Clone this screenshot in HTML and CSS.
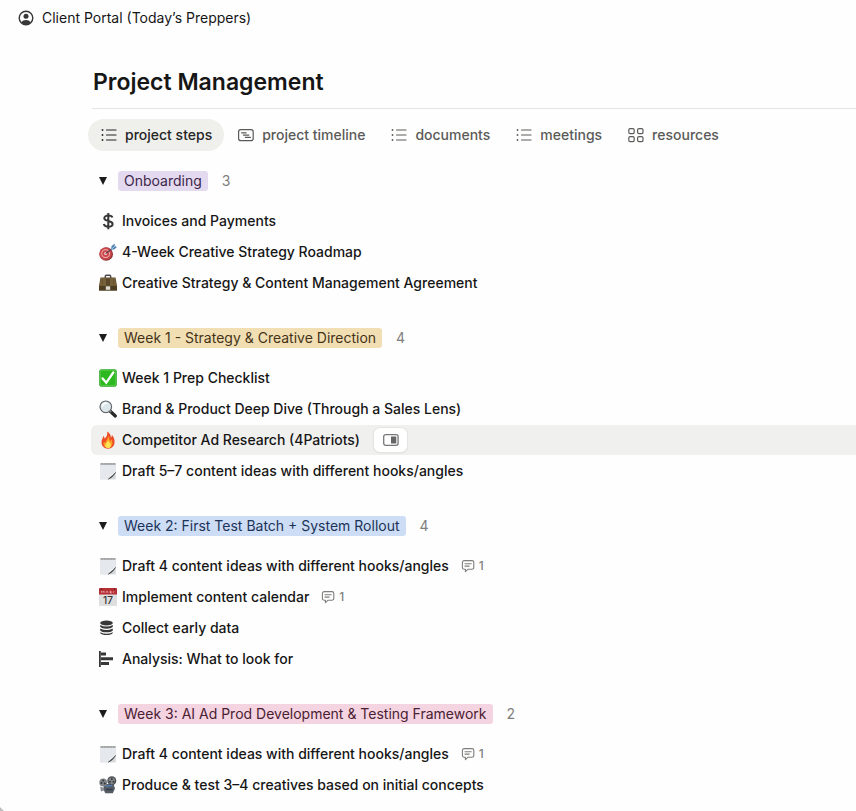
FILE: index.html
```html
<!DOCTYPE html>
<html lang="en">
<head>
<meta charset="utf-8">
<meta name="viewport" content="width=device-width, initial-scale=1">
<title>Client Portal (Today’s Preppers)</title>
<link rel="stylesheet" href="styles.css">
</head>
<body>
<svg class="sprite" aria-hidden="true">
  <symbol id="list" viewBox="0 0 16 16"><g fill="none" stroke="currentColor" stroke-width="1.2" stroke-linecap="round"><path d="M5.500 3h9.500M5.500 8h9.500M5.500 13h9.500"/></g><g fill="currentColor"><circle cx="1.500" cy="3" r=".9"/><circle cx="1.500" cy="8" r=".9"/><circle cx="1.500" cy="13" r=".9"/></g></symbol>
  <symbol id="timeline" viewBox="0 0 16 16"><g fill="none" stroke="currentColor" stroke-width="1.2" stroke-linecap="round"><rect x=".6" y="2.6" width="14.6" height="11" rx="2.2"/><path d="M3.6 5.8h4.6M5.4 8.1h5.4M7.4 10.4h5"/></g></symbol>
  <symbol id="gallery" viewBox="0 0 16 16"><g fill="none" stroke="currentColor" stroke-width="1.2"><rect x=".8" y="1.6" width="5.4" height="5" rx="1.4"/><rect x="9.6" y="1.6" width="5.4" height="5" rx="1.4"/><rect x=".8" y="9.6" width="5.4" height="5" rx="1.4"/><rect x="9.6" y="9.6" width="5.4" height="5" rx="1.4"/></g></symbol>
  <symbol id="comment" viewBox="0 0 14 14"><path d="M3.2 1.6h7.8a1.8 1.8 0 0 1 1.8 1.8v5a1.8 1.8 0 0 1-1.8 1.8H7.2L4.4 12.6v-2.4H3.2a1.8 1.8 0 0 1-1.8-1.8v-5a1.8 1.8 0 0 1 1.8-1.8zM4 4.7h6.2M4 7.1h4.2" fill="none" stroke="currentColor" stroke-width="1.1" stroke-linejoin="round" stroke-linecap="round"/></symbol>
  <symbol id="dollar" viewBox="0 0 18 18"><path d="M13.4 5.6C13 4.2 11.500 3.500 9.300 3.500 6.900 3.500 5.300 4.500 5.300 6.200c0 3.700 8.300 1.900 8.300 5.700 0 1.800-1.800 2.800-4.300 2.800-2.500 0-4.100-1-4.500-2.600M9.300 1v16.200" fill="none" stroke="#373737" stroke-width="2"/></symbol>
  <symbol id="target" viewBox="0 0 18 18"><circle cx="7.200" cy="11" r="6.800" fill="#8f3438"/><circle cx="6.600" cy="10.600" r="6.200" fill="#cd474b"/><circle cx="6.600" cy="10.600" r="4.300" fill="#e9b5b7"/><circle cx="6.600" cy="10.600" r="3.400" fill="#cf4348"/><circle cx="6.600" cy="10.600" r="1.500" fill="#f2d2d2"/><path d="M6.600 10.600L14 5" stroke="#513a4e" stroke-width="1.100"/><path d="M12 6.500l.6-3.500L15.600.7l.2 2.400 2.100.9-2.700 2.500z" fill="#4d7fb0"/><path d="M12 6.500l4-3.400" stroke="#bcdcf2" stroke-width=".8"/></symbol>
  <symbol id="briefcase" viewBox="0 0 18 18"><path d="M6.300 4V2.500Q6.300 1.300 7.500 1.300h3Q11.700 1.300 11.700 2.500V4" fill="none" stroke="#4a484a" stroke-width="1.400"/><path d="M1.500 3.500h15L18 12v4.500H0V12z" fill="#5c4928"/><path d="M2 4h14l1.300 7H.7z" fill="#75603a"/><path d="M0 11.500h18v5H0z" fill="#4d3d22"/><path d="M.6 11.200h16.800" stroke="#927a4c" stroke-width=".7"/><path d="M7 4.500h4v7H7z" fill="#5b4729"/><path d="M6.800 12.300h4.400v3.500H6.800z" fill="#dfdcd4"/><path d="M3.400 5v7M14.600 5v7" stroke="#655130" stroke-width=".8"/></symbol>
  <symbol id="check" viewBox="0 0 18 18"><rect x=".2" y=".2" width="17.600" height="17.600" rx="2.400" fill="#1c9e17"/><rect x="1.200" y="1.100" width="15.600" height="15.600" rx="1.800" fill="#2cb91f" stroke="#88dc75" stroke-width=".6"/><path d="M3.600 9.400l3.700 4.300 7-10.200" fill="none" stroke="#fff" stroke-width="2.300" stroke-linecap="round"/></symbol>
  <symbol id="search" viewBox="0 0 18 18"><path d="M11 11l5.300 5" stroke="#292929" stroke-width="3.200" stroke-linecap="round"/><path d="M10.500 10.600l1.700 1.700" stroke="#888" stroke-width="1.500"/><circle cx="6.800" cy="6.800" r="5.800" fill="#dce7ec" stroke="#62676a" stroke-width="1.200"/><path d="M3.300 6.500a3.700 3.700 0 0 1 4-3.200" fill="none" stroke="#fff" stroke-width="1.600" stroke-linecap="round"/></symbol>
  <symbol id="fire" viewBox="0 0 18 18"><path d="M8.200.5c3.300 2 3.700 4.500 3.600 6 1-.5 1.200-1.700 1-2.700 1.800 2 2.800 4.400 2.800 7 0 4-2.700 6.900-6.600 6.900-4 0-6.500-2.700-6.500-6.400 0-2.700 1.400-4.200 1.900-6.300.9.800 1.200 1.700 1.100 2.800C7.800 5.900 8.700 3.200 8.200.5z" fill="#ed4d24"/><path d="M9.200 4.500c1.700 2.500.8 4.200 2 5.300.9-.3 1.400-.9 1.600-1.600 1.300 3.600.7 8.300-3.700 8.500-3.700.1-5.200-2.700-4.300-6 .5.700 1.100 1 1.800.9.200-2.700 2.800-3.600 2.600-7.100z" fill="#ff9b28"/><path d="M9.200 9c.1 2.200 2.700 2.700 2.700 5.200 0 1.900-1.100 2.800-2.800 2.800s-2.900-1-2.800-2.700c.1-2.100 2.700-2.800 2.900-5.300z" fill="#ffe454"/></symbol>
  <symbol id="note" viewBox="0 0 18 18"><path d="M1.400 1h15.300v16.400H1.400z" fill="#d5d7d9"/><path d="M1.400 3h15v7.500L9.500 17H1.400z" fill="#e5e8ec"/><path d="M1.400 1h15.300v2H1.400z" fill="#b5b6b8"/><path d="M2 1.900h14" stroke="#77797b" stroke-width=".8" stroke-dasharray=".7 .8"/><path d="M9.500 17l1.600-4.200q3 .2 5.400-2.600z" fill="#f3f4f5"/><path d="M9.300 17.200q4.300-1.600 7.300-6.800-2.200 3-4.600 4.300z" fill="#333638" stroke="#333638" stroke-width=".5"/></symbol>
  <symbol id="database" viewBox="0 0 18 18"><g fill="#373737"><ellipse cx="7.500" cy="4" rx="6.300" ry="2.600"/><path d="M1.200 6q6.300 3 12.600 0v1.800q-1.600 1.900-6.300 1.900T1.200 7.800zM1.200 9.600q6.300 3 12.600 0v1.800q-1.600 1.900-6.300 1.900t-6.300-1.900zM1.200 13.200q6.300 3 12.600 0V14q-1.600 2.100-6.300 2.100T1.200 14z"/></g></symbol>
  <symbol id="chart" viewBox="0 0 18 18"><path d="M0 1h1.800v16H0zM2 2.500h5v3H2zM2 7.300h12v3H2zM2 12.100h8v3H2z" fill="#373737"/></symbol>
  <symbol id="projector" viewBox="0 0 18 18"><path d="M4.800 8.400l9.400-1.200 1.800 5.400-2.200 4.700H6.300L4.300 13z" fill="#555b64"/><path d="M1 10.500l4 1.500v2.500L2 15.600z" fill="#898e95"/><circle cx="4.200" cy="6.400" r="3.900" fill="#7f8489"/><circle cx="12.800" cy="4.800" r="4.500" fill="#494d52"/><circle cx="12.800" cy="4.800" r="3.200" fill="#85888b"/><g fill="#34383c"><circle cx="4.200" cy="4.500" r="1"/><circle cx="2.500" cy="7" r="1"/><circle cx="5.800" cy="7.400" r="1"/><circle cx="12.800" cy="3" r="1"/><circle cx="11" cy="5.700" r="1"/><circle cx="14.500" cy="5.700" r="1"/></g><path d="M7 10.300l6.500-1" stroke="#527bad" stroke-width="1.400"/><path d="M7 13.500h6.500" stroke="#343c47" stroke-width="1.500"/></symbol>
</svg>

<header class="topbar">
  <a class="crumb" href="#">
    <svg class="icon-16" viewBox="0 0 16 16" aria-hidden="true"><circle cx="8" cy="8" r="6.800" fill="none" stroke="#373737" stroke-width="1.400"/><circle cx="8" cy="6.200" r="2.500" fill="#373737"/><path d="M3.200 12.300Q5 10 8 10t4.800 2.300Q11 14.600 8 14.600t-4.800-2.300z" fill="#373737"/></svg>
    <span>Client Portal (Today’s Preppers)</span>
  </a>
</header>

<main class="page">
  <h1 class="title">Project Management</h1>
  <nav class="tabs" aria-label="Views">
    <a class="tab tab-active" href="#" aria-current="page"><svg class="icon-16" aria-hidden="true"><use href="#list"/></svg>project steps</a>
    <a class="tab" href="#"><svg class="icon-16" aria-hidden="true"><use href="#timeline"/></svg>project timeline</a>
    <a class="tab" href="#"><svg class="icon-16" aria-hidden="true"><use href="#list"/></svg>documents</a>
    <a class="tab" href="#"><svg class="icon-16" aria-hidden="true"><use href="#list"/></svg>meetings</a>
    <a class="tab" href="#"><svg class="icon-16" aria-hidden="true"><use href="#gallery"/></svg>resources</a>
  </nav>

  <section class="group">
    <div class="group-head">
      <button class="toggle" type="button" aria-label="Toggle group" aria-expanded="true"></button>
      <h2 class="tag tag-purple">Onboarding</h2><span class="count">3</span>
    </div>
    <ul class="rows">
      <li class="row"><a class="item" href="#"><svg class="icon-18" aria-hidden="true"><use href="#dollar"/></svg>Invoices and Payments</a></li>
      <li class="row"><a class="item" href="#"><svg class="icon-18" aria-hidden="true"><use href="#target"/></svg>4-Week Creative Strategy Roadmap</a></li>
      <li class="row"><a class="item" href="#"><svg class="icon-18" aria-hidden="true"><use href="#briefcase"/></svg>Creative Strategy &amp; Content Management Agreement</a></li>
    </ul>
  </section>

  <section class="group">
    <div class="group-head">
      <button class="toggle" type="button" aria-label="Toggle group" aria-expanded="true"></button>
      <h2 class="tag tag-yellow">Week 1 - Strategy &amp; Creative Direction</h2><span class="count">4</span>
    </div>
    <ul class="rows">
      <li class="row"><a class="item" href="#"><svg class="icon-18" aria-hidden="true"><use href="#check"/></svg>Week 1 Prep Checklist</a></li>
      <li class="row"><a class="item" href="#"><svg class="icon-18" aria-hidden="true"><use href="#search"/></svg>Brand &amp; Product Deep Dive (Through a Sales Lens)</a></li>
      <li class="row row-hover"><a class="item" href="#"><svg class="icon-18" aria-hidden="true"><use href="#fire"/></svg>Competitor Ad Research (4Patriots)</a>
        <button class="peek" type="button" aria-label="Open in side peek"><svg class="icon-16" viewBox="0 0 16 16" aria-hidden="true"><rect x=".7" y="2.700" width="14.400" height="10.600" rx="2" fill="none" stroke="#777" stroke-width="1.300"/><path d="M8 4.500h5.300v7H8z" fill="#666"/></svg></button></li>
      <li class="row"><a class="item" href="#"><svg class="icon-18" aria-hidden="true"><use href="#note"/></svg>Draft 5–7 content ideas with different hooks/angles</a></li>
    </ul>
  </section>

  <section class="group">
    <div class="group-head">
      <button class="toggle" type="button" aria-label="Toggle group" aria-expanded="true"></button>
      <h2 class="tag tag-blue">Week 2: First Test Batch + System Rollout</h2><span class="count">4</span>
    </div>
    <ul class="rows">
      <li class="row"><a class="item" href="#"><svg class="icon-18" aria-hidden="true"><use href="#note"/></svg>Draft 4 content ideas with different hooks/angles</a><button class="comments" type="button"><svg class="icon-14" aria-hidden="true"><use href="#comment"/></svg>1</button></li>
      <li class="row"><a class="item" href="#"><svg class="icon-18" viewBox="0 0 18 18" aria-hidden="true"><rect y="0" width="18" height="18" rx="1" fill="#dedede"/><path d="M0 1q0-1 1-1h16q1 0 1 1v5.600H0z" fill="#b62f34"/><path d="M2.500 4.900v-2l1.300 1.400 1.300-1.400v2M7 4.900l1-2 1 2M11 4.900v-2l1.500.9-1.500.9 2 .4M15 3l-.8 2" stroke="#ecc1c2" stroke-width=".6" fill="none"/><circle cx="2.400" cy="1.300" r=".8" fill="#631d1e"/><circle cx="15.600" cy="1.300" r=".8" fill="#631d1e"/><text class="calendar-day" x="9" y="16">17</text></svg>Implement content calendar</a><button class="comments" type="button"><svg class="icon-14" aria-hidden="true"><use href="#comment"/></svg>1</button></li>
      <li class="row"><a class="item" href="#"><svg class="icon-18" aria-hidden="true"><use href="#database"/></svg>Collect early data</a></li>
      <li class="row"><a class="item" href="#"><svg class="icon-18" aria-hidden="true"><use href="#chart"/></svg>Analysis: What to look for</a></li>
    </ul>
  </section>

  <section class="group">
    <div class="group-head">
      <button class="toggle" type="button" aria-label="Toggle group" aria-expanded="true"></button>
      <h2 class="tag tag-pink">Week 3: AI Ad Prod Development &amp; Testing Framework</h2><span class="count">2</span>
    </div>
    <ul class="rows">
      <li class="row"><a class="item" href="#"><svg class="icon-18" aria-hidden="true"><use href="#note"/></svg>Draft 4 content ideas with different hooks/angles</a><button class="comments" type="button"><svg class="icon-14" aria-hidden="true"><use href="#comment"/></svg>1</button></li>
      <li class="row"><a class="item" href="#"><svg class="icon-18" aria-hidden="true"><use href="#projector"/></svg>Produce &amp; test 3–4 creatives based on initial concepts</a></li>
    </ul>
  </section>
</main>
<div class="window-corner"></div>
</body>
</html>
```
FILE: styles.css
```css
* { box-sizing: border-box; }

body {
  margin: 0;
  background: #fefefe;
  color: #161616;
  font: 500 14px/20px Inter, "Liberation Sans", sans-serif;
}

a { color: inherit; text-decoration: none; }

button {
  margin: 0;
  padding: 0;
  border: 0;
  background: none;
  color: inherit;
  font: inherit;
}

.sprite { position: absolute; width: 0; height: 0; }
.icon-14, .icon-16, .icon-18 { flex: none; display: block; }
.icon-14 { width: 14px; height: 14px; }
.icon-16 { width: 16px; height: 16px; }
.icon-18 { width: 18px; height: 18px; }

.topbar { display: flex; padding: 8px 18px; }

.crumb {
  display: flex;
  align-items: center;
  gap: 8px;
  font-weight: 400;
}

.page { padding: 30px 0 4px 92px; }

.title {
  margin: 0;
  padding: 0 1px 10px;
  border-bottom: 1px solid #e4e4e3;
  font-size: 23px;
  line-height: 32px;
  font-weight: 600;
}

.tabs {
  display: flex;
  gap: 1px;
  margin: 10px 0 0 -4px;
}

.tab {
  display: flex;
  align-items: center;
  gap: 8px;
  height: 32px;
  padding: 0 12px 0 13px;
  border-radius: 16px;
  color: #5a5a58;
  white-space: nowrap;
}

.tab-active { background: #efefec; color: #252525; }

.group { margin-top: 30px; }
.tabs + .group { margin-top: 20px; }

.group-head {
  display: flex;
  align-items: center;
  height: 20px;
}

.toggle {
  width: 10px;
  height: 20px;
  margin: 0 10px 0 6px;
}

.toggle::before {
  content: "";
  display: block;
  height: 8px;
  margin: 0 1px;
  background: #1c1c1c;
  clip-path: polygon(0 0, 100% 0, 50% 100%);
}

.tag {
  margin: 0;
  padding: 0 6px;
  border-radius: 3px;
  font-size: 14px;
  line-height: 20px;
  font-weight: 400;
  white-space: nowrap;
}

.tag-purple { background: #e4daf0; color: #3d2649; }
.tag-yellow { background: #f1dfb3; color: #453319; }
.tag-blue { background: #cdddf5; color: #1c3358; }
.tag-pink { background: #f4d4e0; color: #4a2033; }

.count { margin-left: 14px; color: #7e7e7c; font-weight: 400; }

.rows {
  margin: 15px 0 0;
  padding: 0;
  list-style: none;
}

.row {
  display: flex;
  align-items: center;
  height: 30px;
  margin: 0 0 1px -1px;
  padding-left: 8px;
  border-radius: 6px 0 0 6px;
}

.row-hover { background: #f0f0ef; }

.item {
  display: flex;
  align-items: center;
  gap: 5px;
  white-space: nowrap;
}

.peek {
  display: grid;
  place-items: center;
  width: 33px;
  height: 24px;
  margin-left: 14px;
  border-radius: 6px;
  background: #fff;
  box-shadow: 0 0 0 1px #e4e4e3, 0 1px 2px #0000001a;
}

.comments {
  display: flex;
  align-items: center;
  gap: 4px;
  margin-left: 12px;
  color: #7e7e7c;
  font-size: 12px;
}

.calendar-day {
  fill: #333;
  font-size: 10px;
  text-anchor: middle;
}

.window-corner {
  position: fixed;
  left: 0;
  bottom: 0;
  width: 4px;
  height: 4px;
  background: #bdbdbd;
  clip-path: polygon(0 0, 100% 100%, 0 100%);
}
```
